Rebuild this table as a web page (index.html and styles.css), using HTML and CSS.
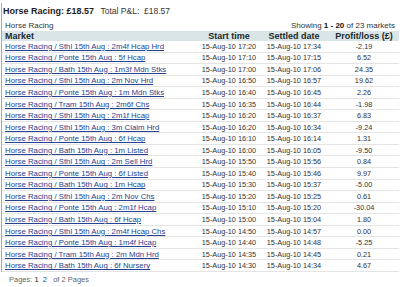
FILE: index.html
```html
<!DOCTYPE html>
<html lang="en">
<head>
    <meta charset="UTF-8">
    <title>Horse Racing P&amp;L</title>
    <link rel="stylesheet" href="styles.css">
</head>
<body>
    <div class="panel">
        <div class="summary">
            <span class="summary-title">Horse Racing: &pound;18.57</span>
            <span class="summary-total">Total P&amp;L: &nbsp;&pound;18.57</span>
        </div>

        <div class="toolbar">
            <span class="crumb">Horse Racing</span>
            <span class="showing">Showing <b>1 - 20</b> of 23 markets</span>
        </div>

        <!-- Markets table -->
        <div class="markets">
            <div class="row head">
                <div class="c-market">Market</div>
                <div class="c-num">Start time</div>
                <div class="c-num">Settled date</div>
                <div class="c-num">Profit/loss (&pound;)</div>
            </div>
            <div id="rows"></div>
        </div>
    </div>

    <div class="pages">
        Pages: <b>1</b> <a href="#">2</a> &nbsp; of 2 Pages
    </div>

    <script>
        // Settled markets
        const markets = [
            ["Sthl 15th Aug : 2m4f Hcap Hrd", "17:20", "17:34", "-2.19"],
            ["Ponte 15th Aug : 5f Hcap", "17:10", "17:15", "6.52"],
            ["Bath 15th Aug : 1m3f Mdn Stks", "17:00", "17:06", "24.35"],
            ["Sthl 15th Aug : 2m Nov Hrd", "16:50", "16:57", "19.62"],
            ["Ponte 15th Aug : 1m Mdn Stks", "16:40", "16:45", "2.26"],
            ["Tram 15th Aug : 2m6f Chs", "16:35", "16:44", "-1.98"],
            ["Sthl 15th Aug : 2m1f Hcap", "16:20", "16:37", "6.83"],
            ["Sthl 15th Aug : 3m Claim Hrd", "16:20", "16:34", "-9.24"],
            ["Ponte 15th Aug : 6f Hcap", "16:10", "16:14", "1.31"],
            ["Bath 15th Aug : 1m Listed", "16:00", "16:05", "-9.50"],
            ["Sthl 15th Aug : 2m Sell Hrd", "15:50", "15:56", "0.84"],
            ["Ponte 15th Aug : 6f Listed", "15:40", "15:46", "9.97"],
            ["Bath 15th Aug : 1m Hcap", "15:30", "15:37", "-5.00"],
            ["Sthl 15th Aug : 2m Nov Chs", "15:20", "15:25", "0.61"],
            ["Ponte 15th Aug : 2m1f Hcap", "15:10", "15:20", "-30.04"],
            ["Bath 15th Aug : 6f Hcap", "15:00", "15:04", "1.80"],
            ["Sthl 15th Aug : 2m4f Hcap Chs", "14:50", "14:57", "0.00"],
            ["Ponte 15th Aug : 1m4f Hcap", "14:40", "14:48", "-5.25"],
            ["Tram 15th Aug : 2m Mdn Hrd", "14:35", "14:45", "0.21"],
            ["Bath 15th Aug : 6f Nursery", "14:30", "14:34", "4.67"]
        ];

        let html = "";
        markets.forEach(function (m) {
            html += `<div class="row">
                <div class="c-market"><a href="#">Horse Racing / ${m[0]}</a></div>
                <div class="c-num">15-Aug-10 ${m[1]}</div>
                <div class="c-num">15-Aug-10 ${m[2]}</div>
                <div class="c-num">${m[3]}</div>
            </div>`;
        });
        document.getElementById("rows").innerHTML = html;
    </script>
</body>
</html>
```

FILE: styles.css
```css
/* General */
body {
    margin: 0;
    background-color: #ffffff;
    font-family: "Liberation Sans", Arial, sans-serif;
    color: #333333;
    width: 400px;
    height: 287px;
    overflow: hidden;
}

.panel {
    margin: 3px 0 0 1px;
    border-left: 1px solid #a8a8a8;
    width: 397px;
}

/* Summary line */
.summary {
    height: 12px;
    line-height: 12px;
    padding-left: 1px;
    white-space: nowrap;
}

.summary-title {
    font-size: 9px;
    font-weight: bold;
    color: #1c1c1c;
}

.summary-total {
    font-size: 8.5px;
    margin-left: 2px;
    color: #333333;
}

.toolbar {
    display: flex;
    justify-content: space-between;
    align-items: flex-end;
    height: 16px;
    font-size: 8px;
    line-height: 10px;
    padding: 0 4px 0 3px;
    color: #333333;
}

.showing b {
    color: #111111;
}

/* Markets table */
.markets {
    font-size: 7.3px;
}

.row {
    display: grid;
    grid-template-columns: 197px 60px 70px 70px;
    height: 11.55px;
    align-items: center;
    border-bottom: 1px solid #e4e4e4;
    box-sizing: border-box;
    white-space: nowrap;
}

.row.head {
    height: 10px;
    background-color: #d9e5e7;
    border-bottom: none;
    font-weight: bold;
    font-size: 9px;
    color: #1d2a2c;
}

.c-market {
    padding-left: 3px;
}

.c-num {
    text-align: center;
}

.row .c-market a {
    font-size: 7.8px;
    color: #27428e;
    text-decoration: underline;
}

.pages {
    font-size: 7.5px;
    color: #666666;
    padding: 3px 0 0 9px;
}

.pages b {
    font-weight: normal;
    color: #111111;
}

.pages a {
    color: #27428e;
    text-decoration: none;
    margin-left: 2px;
}
```
